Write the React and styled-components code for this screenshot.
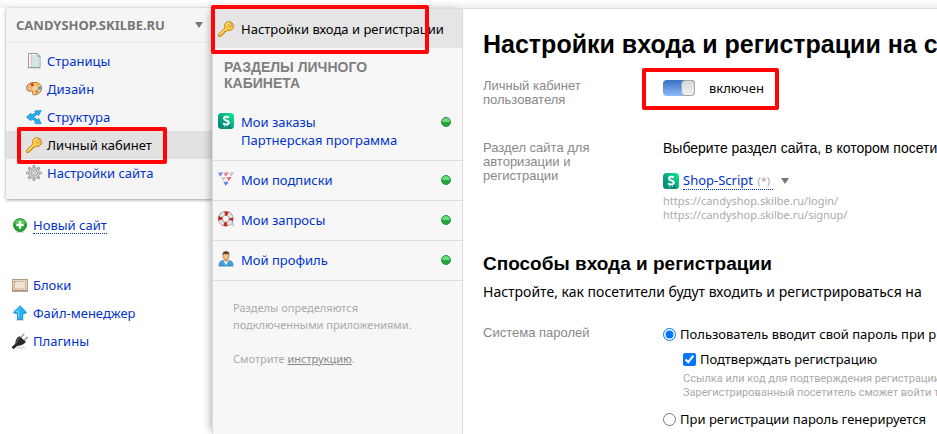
import React, { useState } from 'react';
import styled, { createGlobalStyle } from 'styled-components';

const uiFont = `'Noto Sans', 'Open Sans', sans-serif`;
const headingFont = `'Liberation Sans', Arial, sans-serif`;

const GlobalStyle = createGlobalStyle`
  * {
    box-sizing: border-box;
  }

  body {
    margin: 0;
    background: #fff;
    color: #000;
    font-family: ${uiFont};
    font-size: 13px;
    overflow: hidden;
  }

  h1, h2, h3, p, ul {
    margin: 0;
    padding: 0;
  }

  ul {
    list-style: none;
  }

  a {
    color: #0033cc;
    text-decoration: none;
  }
`;

/* icons */

const Icon = styled.svg.attrs({
  viewBox: '0 0 16 16',
  width: 16,
  height: 16,
  'aria-hidden': true,
})`
  display: block;
  flex: none;
`;

const PageIcon = () => (
  <Icon>
    <rect x="1" y="14" width="14" height="1.5" fill="#d0d0d0" />
    <path d="M2.500 .5h8.500l3 3v11H2.500z" fill="#f8fcfb" stroke="#8da19d" />
    <path d="M11 .5v3h3z" fill="#c7dcd6" stroke="#8da19d" strokeWidth=".7" />
    <path d="M6 3h4M6 5h7M6 7h7M6 9h7M6 11h7M6 13h7" stroke="#9cc7bc" strokeWidth=".8" />
    <path d="M5.200 1v13" stroke="#f0a0a0" strokeWidth=".9" />
  </Icon>
);

const PaletteIcon = () => (
  <Icon>
    <path
      d="M.6 7.500C.3 3.800 4.200 1.500 8.500 1.500c4 0 7 2 7 5.500 0 4-3.500 6.800-7 6.800-1.800 0-2.300-1-1.800-2.200.5-1.300-.4-1.900-1.700-1.600C2.500 10.600.8 9.500.6 7.500z"
      fill="#f6c98b"
      stroke="#a96a2b"
    />
    <circle cx="3.700" cy="7.200" r="1.300" fill="#fff" stroke="#b5763a" strokeWidth=".7" />
    <circle cx="6.300" cy="3.800" r="1.700" fill="#e2401c" />
    <circle cx="11" cy="3.700" r="1.600" fill="#e8c51c" />
    <circle cx="13.300" cy="7" r="1.600" fill="#2f9fe0" />
    <circle cx="10.700" cy="10.500" r="1.500" fill="#d9822b" />
    <circle cx="9.500" cy="7" r="1" fill="#fbe3bd" />
  </Icon>
);

const StructureIcon = () => (
  <Icon>
    <ellipse cx="11.500" cy="15" rx="3.500" ry=".8" fill="#d4d4d4" />
    <path
      d="M.5 8l4.500-3.800v2L9.500 4 8.800 2l6.400-.6-2.600 5.200-1.200-1.200L7.200 8l4.200 2.600 1.200-1.200 2.600 5.200-6.400-.6.700-2L5 9.800v2z"
      fill="#27b0ee"
      stroke="#0b86c8"
      strokeWidth=".7"
    />
  </Icon>
);

const KeyIcon = () => (
  <Icon>
    <path
      d="M.6 13.200 7 6.800C5.900 3.800 7.400.7 10.700.7c2.800 0 4.700 1.800 4.700 4.400 0 3.200-2.900 5.200-6 4.200l-1.200 1.300-1.500-.1-.1 1.600-1.500.1-.1 1.600-1.500.1-.7 1.500-2.100.1z"
      fill="#fcc93d"
      stroke="#c57b12"
    />
    <path d="M1.800 13.500l6.200-6.200M8.500 3.700C9.200 2.200 10.300 1.700 12 1.900" fill="none" stroke="#fff0a6" />
    <circle cx="12" cy="4.200" r="1.400" fill="#fff" stroke="#c57b12" strokeWidth=".8" />
  </Icon>
);

const GearIcon = () => (
  <Icon>
    <g stroke="#858585" strokeWidth="2.600">
      <path d="M8 .2v15.600M.2 8h15.600M2.500 2.500l11 11M13.500 2.500l-11 11" />
    </g>
    <g stroke="#d6d6d6" strokeWidth="1.300">
      <path d="M8 .8v14.400M.8 8h14.400M3 3l10 10M13 3 3 13" />
    </g>
    <circle cx="8" cy="8" r="5.300" fill="#ddd" stroke="#919191" strokeWidth=".8" />
    <circle cx="8" cy="8" r="3.200" fill="#f2f2f2" stroke="#8b8b8b" strokeWidth=".9" />
    <circle cx="8" cy="8" r="1.400" fill="#fff" stroke="#999" strokeWidth=".8" />
  </Icon>
);

const AddIcon = () => (
  <Icon>
    <ellipse cx="8" cy="15" rx="5" ry="1" fill="#ddd" />
    <circle cx="8" cy="8" r="6.500" fill="#22a52c" stroke="#147f1f" strokeWidth=".8" />
    <path d="M2.500 6.500a5.700 5.700 0 0 1 11 0z" fill="#5fca58" />
    <path d="M8 4.300v7.400M4.300 8h7.400" stroke="#fff" strokeWidth="2.300" />
  </Icon>
);

const BlockIcon = () => (
  <Icon>
    <rect x=".6" y="2.500" width="14.800" height="11.500" fill="#e8d8c4" stroke="#b39a7e" />
    <path d="M.5 14h15" stroke="#927b64" />
    <rect x="2.500" y="4.500" width="11" height="7.500" fill="#efe5d5" stroke="#bc9a82" strokeDasharray="1.500 1" />
  </Icon>
);

const UploadIcon = () => (
  <Icon>
    <ellipse cx="8" cy="15" rx="4.500" ry=".8" fill="#ccc" />
    <path d="M8 .8l6.500 6.400-1 1.200h-2.700v6H5.500v-6H2.700L1.500 7.200z" fill="#22b4ef" stroke="#1583bd" strokeWidth=".8" />
    <path d="M8 2.300 4 6.700h2.700v6" fill="none" stroke="#76d8fb" />
  </Icon>
);

const PlugIcon = () => (
  <Icon>
    <ellipse cx="8" cy="14.500" rx="6" ry="1" fill="#ddd" />
    <path d="M9 4.500l3.300-3.800M12.300 7.300l3.300-3.500" stroke="#9d9d9d" strokeWidth="1.500" />
    <path d="M.6 15.200l4-3.700" stroke="#292929" strokeWidth="2.800" />
    <path d="M7.500 3.300l6.500 5.500c-1.900 2.900-5.400 4.200-8.700 4.100l-2-1.900c0-3.300 1.100-6.200 4.200-7.700z" fill="#292929" />
    <path d="M7.500 5C5.500 6.300 5 7.800 4.800 10" fill="none" stroke="#777" />
  </Icon>
);

const ShopIcon = () => (
  <Icon>
    <defs>
      <linearGradient id="shopFill" x1="0" y1="1" x2="1" y2="0">
        <stop offset="0" stopColor="#087d78" />
        <stop offset=".5" stopColor="#08a985" />
        <stop offset="1" stopColor="#10f08a" />
      </linearGradient>
    </defs>
    <rect width="16" height="16" rx="3.500" fill="url(#shopFill)" />
    <path d="M5 10l5 5.500h4L10.500 11z" fill="#087b76" />
    <path
      d="M10.800 4.700C9.700 3.500 6 3.300 6 5.600c0 2.400 4.800 1.300 4.800 3.900 0 2.500-4.200 2.400-5.700.9"
      fill="none"
      stroke="#fff"
      strokeWidth="2"
    />
    <circle cx="6.500" cy="13" r=".7" fill="#bceee3" />
    <circle cx="9.500" cy="13" r=".7" fill="#bceee3" />
  </Icon>
);

const MailingIcon = () => (
  <Icon>
    <path d="M0 1.500h5L2.200 5.500z" fill="#5a70ec" />
    <path d="M5.500 1.500h5L7.700 5.500z" fill="#f0606a" />
    <path d="M11 1.500h5L13.200 5.500z" fill="#bcbcc2" />
    <path d="M3 6h5L5.200 10z" fill="#c0c0c6" />
    <path d="M8.500 6h5L10.700 10z" fill="#ee505c" />
    <path d="M5.500 10.700h5L7.700 14.800z" fill="#4860e8" />
    <path
      d="M.6 1.500l2 1.300M6.100 1.500l2 1.300M11.600 1.500l2 1.300M3.600 6l2 1.300M9.100 6l2 1.300M6.100 10.700l2 1.300"
      fill="none"
      stroke="#fff"
      strokeWidth=".6"
    />
  </Icon>
);

const SupportIcon = () => (
  <Icon>
    <path d="M11 12l4.800 3.500-.8-5z" fill="#aaa" />
    <circle cx="7.700" cy="7.800" r="5.400" fill="none" stroke="#888" strokeWidth="4.800" />
    <circle cx="7.700" cy="7.800" r="5.400" fill="none" stroke="#e4e4e4" strokeWidth="3.600" />
    <circle
      cx="7.700"
      cy="7.800"
      r="5.400"
      fill="none"
      stroke="#c9281f"
      strokeWidth="4"
      strokeDasharray="3.400 5.080"
      strokeDashoffset="1.700"
    />
    <path d="M11.500 12l3.500 3-1-4" fill="#ddd" />
  </Icon>
);

const ProfileIcon = () => (
  <Icon>
    <path d="M1 15c0-3.500 1-5 4.500-5.500h5C14 10 15 11.500 15 15z" fill="#49a7dd" stroke="#2678b5" strokeWidth=".8" />
    <path d="M5.500 9.500 8 14l2.500-4.500z" fill="#fff" />
    <path d="M6.300 7h3.400v3L8 11.500 6.300 10z" fill="#e7a96e" />
    <ellipse cx="8" cy="5" rx="3" ry="3.900" fill="#f3bf88" stroke="#a86b39" strokeWidth=".6" />
    <path d="M4.700 4.500C4 1.500 6 .1 8.300.3c2.300.1 3.500 1.700 3 4.200l-.8-1.700c-1.500.5-3.500.4-5 0z" fill="#633e25" />
    <path d="M4 12v3M12 12v3" stroke="#2678b5" strokeWidth=".7" />
  </Icon>
);

/* shared parts */

const Highlight = styled.span`
  position: absolute;
  inset: ${({ $inset }) => $inset};
  border: 4px solid #ff0505;
  border-radius: 2px;
  pointer-events: none;
`;

const Caret = styled.span`
  border: 4px solid transparent;
  border-top: 6px solid #777;
  border-bottom: 0;
`;

const Layout = styled.div`
  display: flex;
  min-height: 100vh;
  padding: 8px 0 0 6px;
  background: linear-gradient(#fff, #f0f0f0) 0 0 / 100% 8px no-repeat;
`;

/* left sidebar */

const Sidebar = styled.nav`
  flex: none;
  width: 206px;
`;

const SiteCard = styled.section`
  padding-bottom: 12px;
  background: #f5f5f5;
  box-shadow: 0 1px 3px rgba(0, 0, 0, 0.4);
`;

const SiteHeader = styled.button`
  display: flex;
  align-items: center;
  justify-content: space-between;
  width: 100%;
  height: 35px;
  margin-bottom: 4px;
  padding: 0 9px 0 10px;
  border: 0;
  border-bottom: 1px solid #e8e8e8;
  background: none;
  color: #777;
  font: bold 13px ${uiFont};
`;

const SiteItem = styled.li`
  position: relative;
  background: ${({ $active }) => ($active ? '#e2e2e2' : 'none')};
`;

const MenuLink = styled.a`
  display: flex;
  align-items: center;
  gap: 5px;
  height: 28px;
  padding-left: ${({ $nested }) => ($nested ? '20px' : '6px')};
  color: ${({ $active }) => ($active ? '#000' : '#0033cc')};
  white-space: nowrap;
`;

const Dotted = styled.span`
  border-bottom: 1px dotted #0033cc;
  line-height: 16px;
`;

const NewSite = styled.div`
  margin: 12px 0 32px;
`;

/* middle column */

const Sections = styled.aside`
  position: relative;
  flex: none;
  width: 251px;
  border: 1px solid #ddd;
  border-width: 1px 1px 0;
  background: #f7f7f7;
  box-shadow: -4px 0 8px -3px rgba(0, 0, 0, 0.35);
`;

const SettingsTab = styled.a`
  position: relative;
  display: flex;
  align-items: center;
  gap: 7px;
  height: 39px;
  padding-left: 5px;
  background: #e5e5e5;
  color: #000;
  white-space: nowrap;
`;

const SectionsTitle = styled.h3`
  padding: 11px 60px 12px 11px;
  color: #7f7f7f;
  font: bold 14px/16px ${headingFont};
  text-transform: uppercase;
`;

const SectionRow = styled.li`
  display: flex;
  align-items: flex-start;
  gap: 7px;
  padding: 10px 11px 11px 5px;
  border-bottom: 1px solid #ddd;
`;

const SectionLinks = styled.div`
  display: flex;
  flex: 1;
  flex-direction: column;
  line-height: 18px;
`;

const StatusDot = styled.span`
  width: 10px;
  height: 10px;
  margin-top: 4px;
  border: 1px solid #208a38;
  border-radius: 50%;
  background: linear-gradient(#70dc7c 50%, #25a43d 50%);
`;

const SectionsNote = styled.div`
  padding: 18px 20px;
  color: #aaa;
  font-size: 11px;
  line-height: 17px;

  p + p {
    margin-top: 17px;
  }

  a {
    color: #888;
    text-decoration: underline;
  }
`;

/* settings form */

const Content = styled.main`
  flex: 1;
  min-width: 0;
  padding: 20px 0 0 20px;
  border-top: 1px solid #ddd;
  overflow: hidden;
  white-space: nowrap;
`;

const Title = styled.h1`
  margin-bottom: 20px;
  font: bold 25px/30px ${headingFont};
`;

const Subtitle = styled.h2`
  margin-bottom: 6px;
  font: bold 19px/24px ${headingFont};
`;

const Lead = styled.p`
  margin-bottom: 22px;
  font-size: 14px;
  line-height: 20px;
`;

const Field = styled.div`
  display: grid;
  grid-template-columns: 180px 1fr;
  margin-bottom: ${({ $space }) => $space || '0'};
`;

const FieldName = styled.div`
  max-width: 120px;
  padding-top: ${({ $top }) => $top || '0'};
  color: #888;
  font: 13px/14px ${headingFont};
  white-space: normal;
`;

const FieldValue = styled.div`
  min-width: 0;
`;

const SwitchLabel = styled.label`
  position: relative;
  display: inline-flex;
  align-items: center;
  gap: 14px;
  height: 18px;
`;

const Switch = styled.input.attrs({ type: 'checkbox', role: 'switch' })`
  appearance: none;
  display: flex;
  justify-content: flex-start;
  width: 32px;
  height: 16px;
  margin: 0;
  border-radius: 4px;
  background: linear-gradient(#bbb, #ddd);

  &::before {
    content: '';
    width: 12px;
    border: 1px solid #aaa;
    border-radius: 4px;
    background: linear-gradient(#d8d8d8, #f0f0f0);
  }

  &:checked {
    justify-content: flex-end;
    background: linear-gradient(#3c70c4, #8abbfa);
  }
`;

const Intro = styled.p`
  margin-bottom: 15px;
  font: 14px/18px ${headingFont};
`;

const RouteButton = styled.button`
  display: flex;
  align-items: center;
  gap: 4px;
  height: 18px;
  margin-bottom: 4px;
  padding: 0;
  border: 0;
  background: none;
  color: #0033cc;
  font: 13px ${uiFont};

  small {
    margin: 0 3px 0 1px;
    color: #aaa;
    font-size: 11px;
  }

  ${Caret} {
    margin-left: 4px;
  }
`;

const Hint = styled.p`
  color: #aaa;
  font-size: 11px;
  line-height: 14px;
`;

const Option = styled.label`
  display: flex;
  align-items: center;
  gap: 4px;
  height: 20px;

  input {
    width: 13px;
    height: 13px;
    margin: 0;
    accent-color: #0075ff;
  }

  & + ${Hint} {
    margin-top: 3px;
  }
`;

const Nested = styled.div`
  padding: 5px 0 9px 20px;

  ${Hint} {
    font-family: Roboto, ${uiFont};
  }
`;

const siteLinks = [
  { name: 'Страницы', icon: PageIcon },
  { name: 'Дизайн', icon: PaletteIcon },
  { name: 'Структура', icon: StructureIcon },
  { name: 'Личный кабинет', icon: KeyIcon, active: true },
  { name: 'Настройки сайта', icon: GearIcon },
];

const toolLinks = [
  { name: 'Блоки', icon: BlockIcon },
  { name: 'Файл-менеджер', icon: UploadIcon },
  { name: 'Плагины', icon: PlugIcon },
];

const sections = [
  { links: ['Мои заказы', 'Партнерская программа'], icon: ShopIcon },
  { links: ['Мои подписки'], icon: MailingIcon },
  { links: ['Мои запросы'], icon: SupportIcon },
  { links: ['Мой профиль'], icon: ProfileIcon },
];

const SiteSidebar = () => (
  <Sidebar>
    <SiteCard>
      <SiteHeader type="button">
        CANDYSHOP.SKILBE.RU
        <Caret />
      </SiteHeader>
      <ul>
        {siteLinks.map(({ name, icon: ItemIcon, active }) => (
          <SiteItem key={name} $active={active}>
            <MenuLink href="#" $nested $active={active}>
              <ItemIcon />
              {name}
            </MenuLink>
            {active && <Highlight $inset="-4px 45px -5px 11px" />}
          </SiteItem>
        ))}
      </ul>
    </SiteCard>
    <NewSite>
      <MenuLink href="#">
        <AddIcon />
        <Dotted>Новый сайт</Dotted>
      </MenuLink>
    </NewSite>
    {toolLinks.map(({ name, icon: ItemIcon }) => (
      <MenuLink href="#" key={name}>
        <ItemIcon />
        {name}
      </MenuLink>
    ))}
  </Sidebar>
);

const AccountSections = () => (
  <Sections>
    <SettingsTab href="#">
      <KeyIcon />
      Настройки входа и регистрации
      <Highlight $inset="-4px 33px -6px -2px" />
    </SettingsTab>
    <SectionsTitle>Разделы личного кабинета</SectionsTitle>
    <ul>
      {sections.map(({ links, icon: RowIcon }) => (
        <SectionRow key={links[0]}>
          <RowIcon />
          <SectionLinks>
            {links.map((link) => (
              <a href="#" key={link}>
                {link}
              </a>
            ))}
          </SectionLinks>
          <StatusDot />
        </SectionRow>
      ))}
    </ul>
    <SectionsNote>
      <p>Разделы определяются подключенными приложениями.</p>
      <p>
        Смотрите <a href="#">инструкцию</a>.
      </p>
    </SectionsNote>
  </Sections>
);

const App = () => {
  const [enabled, setEnabled] = useState(true);
  const [confirm, setConfirm] = useState(true);
  const [mode, setMode] = useState('own');

  return (
    <>
      <GlobalStyle />
      <Layout>
        <SiteSidebar />
        <AccountSections />
        <Content>
          <Title>Настройки входа и регистрации на с</Title>
          <Field $space="32px">
            <FieldName>Личный кабинет пользователя</FieldName>
            <FieldValue>
              <SwitchLabel>
                <Switch checked={enabled} onChange={(e) => setEnabled(e.target.checked)} />
                {enabled ? 'включен' : 'выключен'}
                <Highlight $inset="-11px -15px -13px -21px" />
              </SwitchLabel>
            </FieldValue>
          </Field>
          <Field $space="30px">
            <FieldName $top="2px">Раздел сайта для авторизации и регистрации</FieldName>
            <FieldValue>
              <Intro>Выберите раздел сайта, в котором посети</Intro>
              <RouteButton type="button">
                <ShopIcon />
                <Dotted>
                  Shop-Script <small>(*)</small>
                </Dotted>
                <Caret />
              </RouteButton>
              <Hint>https://candyshop.skilbe.ru/login/</Hint>
              <Hint>https://candyshop.skilbe.ru/signup/</Hint>
            </FieldValue>
          </Field>
          <Subtitle>Способы входа и регистрации</Subtitle>
          <Lead>Настройте, как посетители будут входить и регистрироваться на</Lead>
          <Field>
            <FieldName $top="2px">Система паролей</FieldName>
            <FieldValue>
              <Option>
                <input type="radio" name="mode" checked={mode === 'own'} onChange={() => setMode('own')} />
                Пользователь вводит свой пароль при р
              </Option>
              <Nested>
                <Option>
                  <input type="checkbox" checked={confirm} onChange={(e) => setConfirm(e.target.checked)} />
                  Подтверждать регистрацию
                </Option>
                <Hint>Ссылка или код для подтверждения регистрации</Hint>
                <Hint>Зарегистрированный посетитель сможет войти т</Hint>
              </Nested>
              <Option>
                <input type="radio" name="mode" checked={mode === 'auto'} onChange={() => setMode('auto')} />
                При регистрации пароль генерируется
              </Option>
            </FieldValue>
          </Field>
        </Content>
      </Layout>
    </>
  );
};

export default App;
